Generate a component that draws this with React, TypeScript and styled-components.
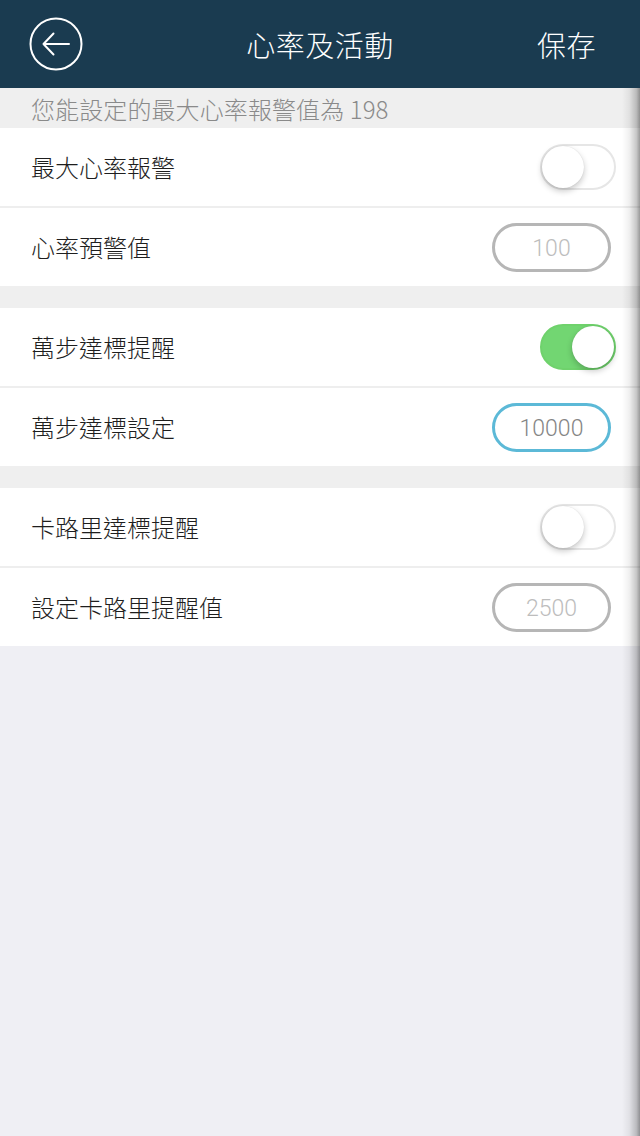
import React from "react";
import styled, { createGlobalStyle } from "styled-components";

const GlobalStyle = createGlobalStyle`
  html, body {
    margin: 0;
    padding: 0;
    background: #efeff4;
  }
  body {
    font-family: "Noto Sans CJK TC", "Noto Sans", "Liberation Sans", sans-serif;
    font-weight: 300;
  }
`;

const Screen = styled.div`
  position: relative;
  width: 640px;
  min-height: 1136px;
  background: #efeff4;
  overflow: hidden;
`;

const Header = styled.header`
  height: 88px;
  background: #1a3b50;
  display: grid;
  grid-template-columns: 1fr auto 1fr;
  align-items: center;
  color: #fff;
`;

const BackButton = styled.button`
  justify-self: start;
  margin-left: 29px;
  padding: 0;
  border: none;
  background: none;
  width: 54px;
  height: 54px;
  display: flex;
  cursor: pointer;
`;

const Title = styled.h1`
  margin: 0;
  font-size: 29px;
  font-weight: 300;
  letter-spacing: 0.5px;
`;

const SaveButton = styled.span`
  justify-self: end;
  margin-right: 44px;
  font-size: 29px;
  font-weight: 300;
  letter-spacing: 0.5px;
`;

const Notice = styled.div`
  height: 40px;
  background: #efefef;
  padding-left: 31px;
  display: flex;
  align-items: center;
  font-size: 24px;
  letter-spacing: 0.1px;
  color: #8a8a8a;
`;

const Settings = styled.div`
  background: #efefef;
  display: flex;
  flex-direction: column;
  gap: 22px;
`;

const Group = styled.section`
  background: #fff;
`;

const Row = styled.div`
  height: 78px;
  padding: 0 24px 0 31px;
  display: flex;
  align-items: center;
  justify-content: space-between;
  & + & {
    border-top: 2px solid #eeeeee;
  }
`;

const Label = styled.span`
  font-size: 24px;
  color: #1e1e1e;
  margin-top: -1px;
`;

const Track = styled.div<{ $on: boolean }>`
  position: relative;
  width: 76px;
  height: 46px;
  box-sizing: border-box;
  border-radius: 23px;
  border: 2px solid ${(p) => (p.$on ? "#6fd26c" : "#e6e6e6")};
  background: ${(p) => (p.$on ? "#72d672" : "#fff")};
`;

const Knob = styled.div<{ $on: boolean }>`
  position: absolute;
  top: 0;
  left: ${(p) => (p.$on ? "30px" : "0")};
  width: 42px;
  height: 42px;
  border-radius: 50%;
  background: #fff;
  box-shadow: 0 3px 6px rgba(0, 0, 0, 0.22), 0 0 1px rgba(0, 0, 0, 0.15);
`;

const Pill = styled.div<{ $active?: boolean }>`
  width: 119px;
  height: 49px;
  box-sizing: border-box;
  margin-right: 5px;
  padding-top: 2px;
  border-radius: 25px;
  border: 3px solid ${(p) => (p.$active ? "#5cb9d7" : "#b6b6b6")};
  display: flex;
  align-items: center;
  justify-content: center;
  font-family: Roboto, "Liberation Sans", sans-serif;
  font-size: 23px;
  font-weight: 300;
  color: ${(p) => (p.$active ? "#858585" : "#bdbdbd")};
`;

// darkening along the right edge, over the content below the bar
const EdgeShade = styled.div`
  position: absolute;
  top: 88px;
  right: 0;
  bottom: 0;
  width: 18px;
  background: linear-gradient(
    to right,
    rgba(0, 0, 0, 0) 0%,
    rgba(0, 0, 0, 0.06) 40%,
    rgba(0, 0, 0, 0.22) 80%,
    rgba(0, 0, 0, 0.4) 100%
  );
  pointer-events: none;
`;

const Toggle = ({ on }: { on: boolean }) => (
  <Track $on={on}>
    <Knob $on={on} />
  </Track>
);

const BackIcon = () => (
  <svg width="54" height="54" viewBox="0 0 54 54" fill="none">
    <circle cx="27" cy="27" r="25.5" stroke="#fff" strokeWidth="2" />
    <path
      d="M14.5 27 H40 M14.5 27 L24.5 16.5 M14.5 27 L24.5 37.5"
      stroke="#fff"
      strokeWidth="2"
      strokeLinecap="round"
      strokeLinejoin="round"
    />
  </svg>
);

type Item =
  | { label: string; kind: "toggle"; on: boolean }
  | { label: string; kind: "input"; value: string; active?: boolean };

const groups: Item[][] = [
  [
    { label: "最大心率報警", kind: "toggle", on: false },
    { label: "心率預警值", kind: "input", value: "100" },
  ],
  [
    { label: "萬步達標提醒", kind: "toggle", on: true },
    { label: "萬步達標設定", kind: "input", value: "10000", active: true },
  ],
  [
    { label: "卡路里達標提醒", kind: "toggle", on: false },
    { label: "設定卡路里提醒值", kind: "input", value: "2500" },
  ],
];

export default function App() {
  return (
    <Screen>
      <GlobalStyle />
      <Header>
        <BackButton aria-label="返回">
          <BackIcon />
        </BackButton>
        <Title>心率及活動</Title>
        <SaveButton>保存</SaveButton>
      </Header>
      <Notice>您能設定的最大心率報警值為 198</Notice>
      <Settings>
        {groups.map((items, gi) => (
          <Group key={gi}>
            {items.map((item) => (
              <Row key={item.label}>
                <Label>{item.label}</Label>
                {item.kind === "toggle" ? (
                  <Toggle on={item.on} />
                ) : (
                  <Pill $active={item.active}>{item.value}</Pill>
                )}
              </Row>
            ))}
          </Group>
        ))}
      </Settings>
      <EdgeShade />
    </Screen>
  );
}
